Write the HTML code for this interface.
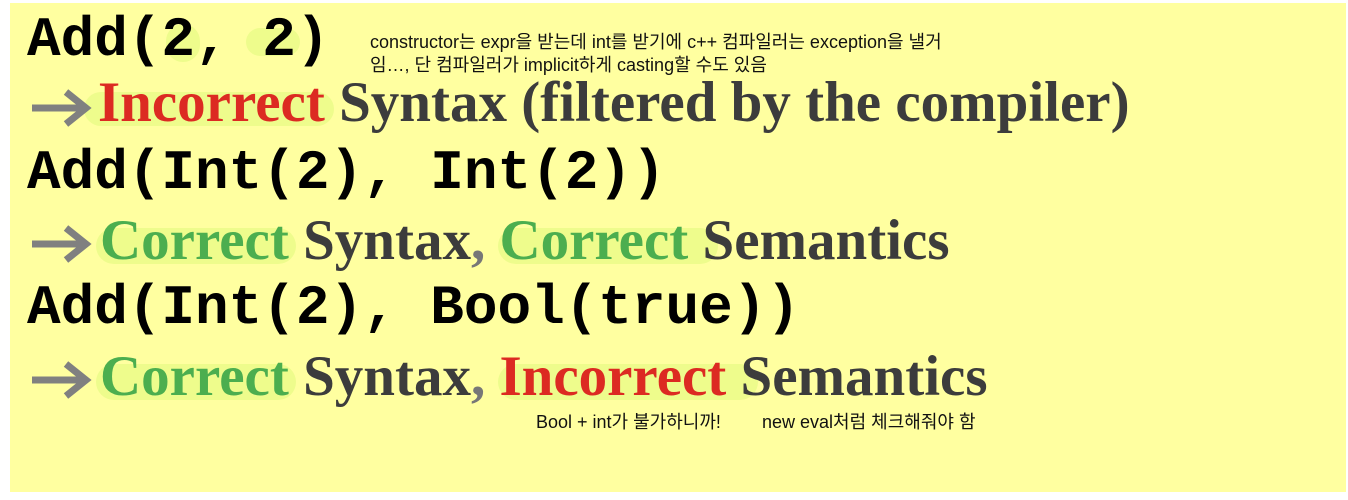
<!DOCTYPE html>
<html><head><meta charset="utf-8"><style>
html,body{margin:0;padding:0;background:#fff;width:1348px;height:500px;overflow:hidden;position:relative}
.box{position:absolute;left:10px;top:3px;width:1336px;height:489px;background:#ffffa0}
.t{position:absolute;white-space:nowrap}
.m{font-family:"Liberation Mono",monospace;font-weight:bold;font-size:56px;line-height:56px;color:#000}
.s{font-family:"Liberation Serif",serif;font-weight:bold;font-size:57px;line-height:57px;color:#3c3c3c}
.k{font-family:"Liberation Sans","Noto Sans CJK KR",sans-serif;font-size:18px;line-height:23px;color:#111}
.r{color:#dc2a22}.g{color:#4cae4f}
.hl{position:absolute;background:#eefc8c;border-radius:18px}
</style></head><body>
<div class="box"></div>
<div class="hl" style="left:166px;top:24px;width:34px;height:38px"></div>
<div class="hl" style="left:246px;top:28px;width:54px;height:28px"></div>
<div class="hl" style="left:84px;top:92px;width:250px;height:34px"></div>
<div class="hl" style="left:96px;top:228px;width:200px;height:36px"></div>
<div class="hl" style="left:498px;top:228px;width:220px;height:36px"></div>
<div class="hl" style="left:96px;top:364px;width:200px;height:36px"></div>
<div class="hl" style="left:498px;top:364px;width:260px;height:36px"></div>

<div class="t m" style="left:27px;top:12px">Add(2, 2)</div>
<div class="t k" style="left:370px;top:31px">constructor는 expr을 받는데 int를 받기에 c++ 컴파일러는 exception을 낼거<br>임…, 단 컴파일러가 implicit하게 casting할 수도 있음</div>

<svg class="t" style="left:30px;top:88px" width="64" height="40" viewBox="0 0 64 40"><path d="M2 20H54M36 4L56 20L36 36" fill="none" stroke="#808080" stroke-width="7"/></svg>
<div class="t s" style="left:98px;top:74px"><span class="r">Incorrect</span> Syntax (filtered by the compiler)</div>

<div class="t m" style="left:27px;top:145px">Add(Int(2), Int(2))</div>
<svg class="t" style="left:30px;top:224px" width="64" height="40" viewBox="0 0 64 40"><path d="M2 20H54M36 4L56 20L36 36" fill="none" stroke="#808080" stroke-width="7"/></svg>
<div class="t s" style="left:100px;top:212px"><span class="g">Correct</span> Syntax<span style="color:#777">,</span> <span class="g">Correct</span> Semantics</div>

<div class="t m" style="left:27px;top:280px">Add(Int(2), Bool(true))</div>
<svg class="t" style="left:30px;top:360px" width="64" height="40" viewBox="0 0 64 40"><path d="M2 20H54M36 4L56 20L36 36" fill="none" stroke="#808080" stroke-width="7"/></svg>
<div class="t s" style="left:100px;top:348px"><span class="g">Correct</span> Syntax<span style="color:#777">,</span> <span class="r">Incorrect</span> Semantics</div>

<div class="t k" style="left:536px;top:411px">Bool + int가 불가하니까!</div>
<div class="t k" style="left:762px;top:411px">new eval처럼 체크해줘야 함</div>
</body></html>
